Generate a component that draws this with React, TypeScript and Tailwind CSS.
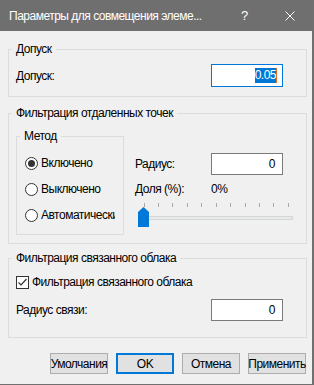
import React from 'react';

const Radio = ({ label, checked, clip }: { label: string; checked?: boolean; clip?: boolean }) => (
  <div className="flex items-center h-[20px]">
    <div className="w-[13px] h-[13px] rounded-full border border-[#333333] bg-white flex items-center justify-center shrink-0">
      {checked && <div className="w-[7px] h-[7px] rounded-full bg-[#333333]" />}
    </div>
    <span className={clip ? 'ml-[3px] w-[74px] overflow-hidden whitespace-nowrap' : 'ml-[3px] whitespace-nowrap'}>{label}</span>
  </div>
);

const Field = ({ value }: { value: string }) => (
  <div className="w-[72px] h-[22px] border border-[#7a7a7a] bg-white flex items-center justify-end pr-[7px]">
    {value}
  </div>
);

const Slider = () => {
  const ticks = Array.from({ length: 11 }, (_, i) => 8.5 + i * 14.43);
  return (
    <svg width="160" height="26" viewBox="0 0 160 26" className="block">
      {ticks.map((x, i) => (
        <line key={i} x1={Math.round(x) + 0.5} y1="1" x2={Math.round(x) + 0.5} y2="5" stroke="#a8a8a8" strokeWidth="1" />
      ))}
      <rect x="8.5" y="14.5" width="149" height="3" fill="#e7eaea" stroke="#d6d6d6" />
      <polygon points="3,10 8.5,5 14,10 14,25 3,25" fill="#0078d7" />
    </svg>
  );
};

export default function App() {
  return (
    <div className="w-[314px] h-[385px] bg-[#f0f0f0] border-r-2 border-b border-[#707070] font-['Segoe_UI','Liberation_Sans',Arial,sans-serif] text-[12px] tracking-[-0.5px] text-black overflow-hidden">
      {/* Title bar */}
      <div className="h-[31px] bg-[#6f6f6f] flex items-center text-white">
        <span className="pl-[9px] w-[233px] whitespace-nowrap overflow-hidden">Параметры для совмещения элеме...</span>
        <span className="ml-[8px] text-[13px]">?</span>
        <svg width="10" height="10" viewBox="0 0 10 10" className="ml-[37px]">
          <path d="M0.5 0.5 L9.5 9.5 M9.5 0.5 L0.5 9.5" stroke="#ffffff" strokeWidth="1" />
        </svg>
      </div>

      {/* Допуск */}
      <fieldset className="ml-[8px] mt-[11px] w-[299px] border border-[#dcdcdc] px-[7px] pb-[9px]">
        <legend className="ml-[-4px] px-[4px] leading-[15px]">Допуск</legend>
        <div className="flex items-center mt-[7px]">
          <span className="w-[195px]">Допуск:</span>
          <div className="w-[72px] h-[23px] border border-[#0078d7] bg-white flex items-center justify-end pr-[5px]">
            <span className="bg-[#0078d7] text-white leading-[15px]">0.05</span>
            <span className="w-[1px] h-[15px] bg-[#e07020]" />
          </div>
        </div>
      </fieldset>

      {/* Фильтрация отдаленных точек */}
      <fieldset className="ml-[8px] mt-[9px] w-[299px] border border-[#dcdcdc] px-[7px] pb-[8px]">
        <legend className="ml-[-4px] px-[4px] leading-[15px]">Фильтрация отдаленных точек</legend>
        <div className="flex items-start">
          <fieldset className="mt-[8px] w-[108px] border border-[#dcdcdc] pl-[8px] pt-[9px] pb-[9px] flex flex-col gap-[6px]">
            <legend className="ml-[-5px] px-[4px] leading-[15px]">Метод</legend>
            <Radio label="Включено" checked />
            <Radio label="Выключено" />
            <Radio label="Автоматически" clip />
          </fieldset>
          <div className="ml-[11px] pt-[32px] flex flex-col">
            <div className="flex items-center">
              <span className="w-[76px]">Радиус:</span>
              <Field value="0" />
            </div>
            <div className="flex items-center h-[14px] mt-[7px]">
              <span className="w-[76px]">Доля (%):</span>
              <span>0%</span>
            </div>
            <div className="mt-[6px]">
              <Slider />
            </div>
          </div>
        </div>
      </fieldset>

      {/* Фильтрация связанного облака */}
      <fieldset className="ml-[8px] mt-[7px] w-[299px] border border-[#dcdcdc] px-[7px] pb-[16px]">
        <legend className="ml-[-4px] px-[4px] leading-[15px]">Фильтрация связанного облака</legend>
        <div className="flex items-center h-[16px] mt-[8px]">
          <div className="w-[13px] h-[13px] border border-[#333333] bg-white flex items-center justify-center">
            <svg width="11" height="11" viewBox="0 0 11 11">
              <path d="M1.5 5.5 L4 8 L9.5 2" fill="none" stroke="#333333" strokeWidth="1.2" />
            </svg>
          </div>
          <span className="ml-[3px]">Фильтрация связанного облака</span>
        </div>
        <div className="flex items-center mt-[9px]">
          <span className="w-[195px]">Радиус связи:</span>
          <Field value="0" />
        </div>
      </fieldset>

      {/* Buttons */}
      <div className="ml-[8px] w-[299px] mt-[15px] flex justify-end gap-[8px] pr-[1px]">
        <button className="w-[58px] h-[21px] bg-[#e1e1e1] border border-[#adadad] whitespace-nowrap flex items-center justify-center">Умолчания</button>
        <button className="w-[58px] h-[21px] bg-[#e1e1e1] border-2 border-[#0078d7] flex items-center justify-center">OK</button>
        <button className="w-[58px] h-[21px] bg-[#e1e1e1] border border-[#adadad] flex items-center justify-center">Отмена</button>
        <button className="w-[58px] h-[21px] bg-[#e1e1e1] border border-[#adadad] whitespace-nowrap flex items-center justify-center">Применить</button>
      </div>
    </div>
  );
}
